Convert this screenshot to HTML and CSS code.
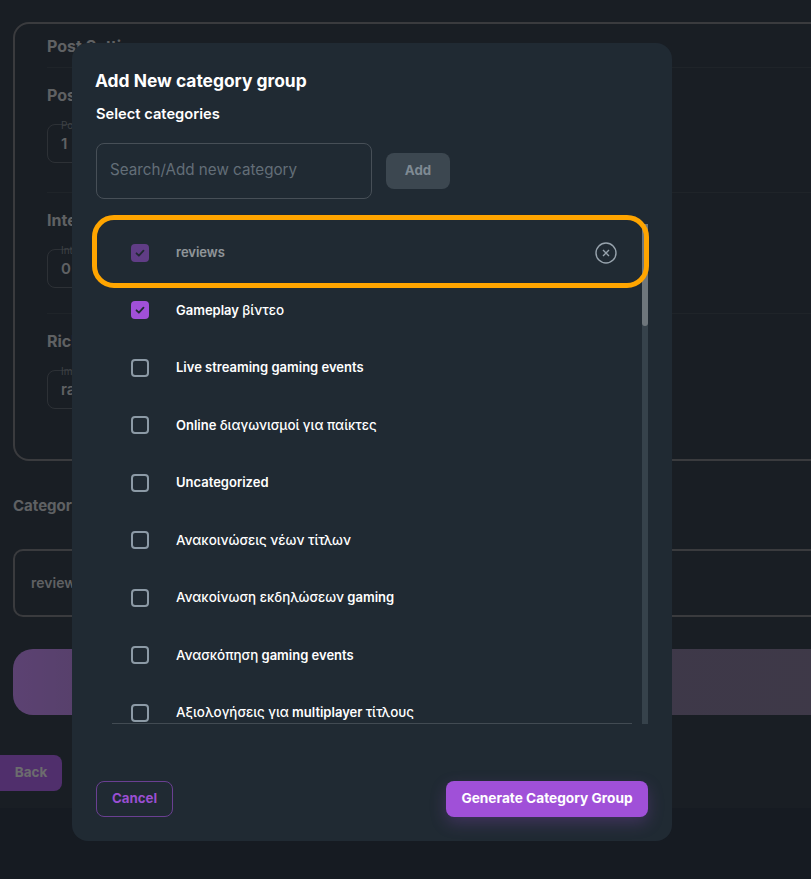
FILE: index.html
```html
<!DOCTYPE html>
<html>
<head>
	<meta charset="UTF-8">
	<title>Add New category group</title>
	<link rel="stylesheet" href="styles.css">
</head>
<body>
<div id="page">
    <div class="card">
        <h3 class="card-title">Post Settings</h3>
        <div class="section first">
            <h4>Posts per day</h4>
            <div class="field"><span class="field-label">Posts</span>1</div>
        </div>
        <div class="section second">
            <h4>Interval</h4>
            <div class="field"><span class="field-label">Interval</span>0</div>
        </div>
        <div class="section">
            <h4>Rich content</h4>
            <div class="field"><span class="field-label">Images</span>ra</div>
        </div>
    </div>
    <h3 class="cat-title">Category groups</h3>
    <div class="cat-box">reviews</div>
    <div class="big-btn"></div>
    <a class="back" href="javascript:;">Back</a>
</div>

<div id="mask"></div>

<div id="modal">
    <h2>Add New category group</h2>
    <h5>Select categories</h5>
    <div class="search">
        <div class="search-box">Search/Add new category</div>
        <a class="add" href="javascript:;">Add</a>
    </div>
    <div class="list-wrap">
        <ul id="list">
            <li class="dim">
                <span class="check on"><svg viewBox="0 0 18 18"><path d="M5.5 9.3l2.4 2.4 4.6-5"/></svg></span>
                <span class="name">reviews</span>
                <svg class="remove" viewBox="0 0 22 22"><circle cx="11" cy="11" r="10"/><path d="M8 8l6 6M14 8l-6 6"/></svg>
            </li>
            <li>
                <span class="check on"><svg viewBox="0 0 18 18"><path d="M5.5 9.3l2.4 2.4 4.6-5"/></svg></span>
                <span class="name">Gameplay <i>βίντεο</i></span>
            </li>
            <li><span class="check"></span><span class="name">Live streaming gaming events</span></li>
            <li><span class="check"></span><span class="name">Online <i>διαγωνισμοί για παίκτες</i></span></li>
            <li><span class="check"></span><span class="name">Uncategorized</span></li>
            <li><span class="check"></span><span class="name"><i>Ανακοινώσεις νέων τίτλων</i></span></li>
            <li><span class="check"></span><span class="name"><i>Ανακοίνωση εκδηλώσεων</i> gaming</span></li>
            <li><span class="check"></span><span class="name"><i>Ανασκόπηση</i> gaming events</span></li>
            <li><span class="check"></span><span class="name"><i>Αξιολογήσεις για</i> multiplayer <i>τίτλους</i></span></li>
        </ul>
        <div class="scrollbar"><div class="thumb"></div></div>
    </div>
    <div class="actions">
        <a class="cancel" href="javascript:;">Cancel</a>
        <a class="generate" href="javascript:;">Generate Category Group</a>
    </div>
    <div class="highlight"></div>
</div>
</body>
</html>
```

FILE: styles.css
```css
*{
    box-sizing: border-box;
}
html,body{
    margin: 0;
    height: 100%;
    overflow: hidden;
}
body{
    background-color: #2c3644;
    font-family: "Inter", "Noto Sans", sans-serif;
}
a{
    text-decoration: none;
    display: block;
}
h2,h3,h4,h5,ul{
    margin: 0;
    padding: 0;
}
#page{
    height: 808px;
    padding: 22px 0 0 0;
    background-color: #323c48;
    color: #bfc2c6;
    overflow: hidden;
}
.card{
    margin-left: 13px;
    width: 900px;
    height: 439px;
    border: 2px solid #74767c;
    border-radius: 16px;
    padding: 12px 0 0 32px;
}
.card-title{
    font-size: 16px;
    line-height: 20px;
    font-weight: 700;
    padding-bottom: 11px;
}
.section{
    border-top: 1px solid #3e4852;
    padding-top: 17px;
    height: 121px;
}
.section.first{
    height: 125px;
}
.section h4{
    font-size: 16px;
    line-height: 20px;
    font-weight: 700;
    margin-bottom: 19px;
}
.field{
    position: relative;
    width: 400px;
    height: 39px;
    border: 1px solid #5a626c;
    border-radius: 8px;
    padding-left: 13px;
    line-height: 37px;
    font-size: 15px;
    font-weight: 600;
}
.field-label{
    position: absolute;
    left: 13px;
    top: -6px;
    font-size: 10px;
    line-height: 12px;
    font-weight: 400;
    color: #7b828a;
}
.cat-title{
    margin: 35px 0 0 13px;
    font-size: 15px;
    line-height: 20px;
    font-weight: 700;
}
.cat-box{
    margin: 33px 0 0 13px;
    width: 900px;
    height: 68px;
    border: 2px solid #74767c;
    border-radius: 10px;
    padding-left: 16px;
    line-height: 64px;
    font-size: 14px;
    font-weight: 600;
}
.big-btn{
    margin: 32px 0 0 13px;
    width: 900px;
    height: 66px;
    border-radius: 20px;
    background: linear-gradient(90deg, #b884e4 0%, #7d7194 45%, #7c7290 100%);
}
.back{
    margin-top: 40px;
    width: 62px;
    height: 36px;
    line-height: 35px;
    text-align: center;
    border-radius: 0 8px 8px 0;
    background-color: #a05ed8;
    font-size: 13.5px;
    font-weight: 700;
    color: #d8d8dc;
}
#mask{
    position: fixed;
    left: 0;
    top: 0;
    width: 100%;
    height: 100%;
    background-color: rgba(0,0,0,.5);
}
#modal{
    position: absolute;
    left: 72px;
    top: 43px;
    width: 600px;
    height: 798px;
    padding: 26px 24px 24px 23px;
    display: flex;
    flex-direction: column;
    background-color: #202a33;
    border-radius: 16px;
    color: #fff;
}
#modal h2{
    font-size: 17.4px;
    line-height: 24px;
    font-weight: 700;
}
#modal h5{
    margin: 11px 0 0 1px;
    font-size: 14.7px;
    line-height: 20px;
    font-weight: 600;
}
.search{
    margin: 19px 0 0 1px;
    display: flex;
    align-items: center;
    gap: 14px;
}
.search-box{
    width: 276px;
    height: 56px;
    border: 1px solid #474f57;
    border-radius: 8px;
    padding-left: 13px;
    line-height: 52px;
    font-size: 15.2px;
    color: #636e78;
}
.add{
    width: 64px;
    height: 36px;
    line-height: 35px;
    text-align: center;
    border-radius: 8px;
    background-color: #3c4750;
    color: #7f8a93;
    font-size: 13.3px;
    font-weight: 700;
}
.list-wrap{
    margin-top: 25px;
    height: 500px;
    display: flex;
    padding-left: 17px;
}
#list{
    list-style: none;
    width: 520px;
    height: 500px;
    overflow: hidden;
    border-bottom: 1px solid #424b53;
}
#list li{
    height: 57.5px;
    display: flex;
    align-items: center;
    padding-left: 19px;
    position: relative;
}
.check{
    width: 18px;
    height: 18px;
    flex: none;
    border: 2px solid #8c9aa6;
    border-radius: 4px;
}
.check.on{
    border: 0;
    background-color: #a050d8;
}
.check svg{
    display: block;
    width: 18px;
    height: 18px;
}
.check svg path{
    fill: none;
    stroke: #202a33;
    stroke-width: 1.8;
    stroke-linecap: round;
    stroke-linejoin: round;
}
.name{
    margin: 0 0 1px 27px;
    font-size: 13px;
    font-weight: 600;
}
.name i{
    font-style: normal;
    font-weight: 500;
    font-size: 13.4px;
}
.dim .check,.dim .name{
    opacity: .5;
}
.remove{
    position: absolute;
    left: 483px;
    top: 18px;
    width: 22px;
    height: 22px;
    fill: none;
    stroke: #97a3ad;
    stroke-width: 1.4;
}
.scrollbar{
    margin-left: 10px;
    width: 6px;
    height: 500px;
    background-color: #36424b;
}
.thumb{
    height: 102px;
    background-color: #6e767c;
    border-radius: 0 0 3px 3px;
}
.actions{
    margin: 57px 0 0 1px;
    display: flex;
    justify-content: space-between;
}
.cancel{
    width: 77px;
    height: 36px;
    line-height: 33px;
    text-align: center;
    border: 1px solid #6a3f92;
    border-radius: 8px;
    color: #9a4fd2;
    font-size: 13.3px;
    font-weight: 700;
}
.generate{
    width: 202px;
    height: 36px;
    line-height: 35px;
    text-align: center;
    border-radius: 8px;
    background-color: #a050d8;
    box-shadow: 0 6px 16px rgba(160,80,216,.25);
    color: #fff;
    font-size: 13.7px;
    font-weight: 700;
}
.highlight{
    position: absolute;
    left: 20px;
    top: 172px;
    width: 557px;
    height: 73px;
    border: 5px solid #ffa500;
    border-radius: 22px;
}
```
